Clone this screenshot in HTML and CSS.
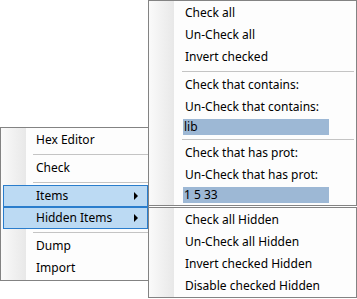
FILE: index.html
```html
<!DOCTYPE html>
<html lang="en">
<head>
  <meta charset="UTF-8" />
  <title>Context menu</title>
  <link rel="stylesheet" href="styles.css">
</head>
<body>

<div class="screen">
  <!-- main context menu -->
  <div class="menu main-menu">
    <div class="item">Hex Editor</div>
    <div class="sep"></div>
    <div class="item">Check</div>
    <div class="sep"></div>
    <div class="item sub active">Items <span class="arrow"></span></div>
    <div class="item sub active">Hidden Items <span class="arrow"></span></div>
    <div class="sep"></div>
    <div class="item">Dump</div>
    <div class="item">Import</div>
  </div>

  <!-- open submenus -->
  <div class="submenus">
    <div class="menu items-menu">
      <div class="item">Check all</div>
      <div class="item">Un-Check all</div>
      <div class="item">Invert checked</div>
      <div class="sep"></div>
      <div class="item">Check that contains:</div>
      <div class="item">Un-Check that contains:</div>
      <div class="field"><span class="field-text">lib</span></div>
      <div class="sep"></div>
      <div class="item">Check that has prot:</div>
      <div class="item">Un-Check that has prot:</div>
      <div class="field"><span class="field-text">1 5 33</span></div>
    </div>
    <div class="menu hidden-menu">
      <div class="item">Check all Hidden</div>
      <div class="item">Un-Check all Hidden</div>
      <div class="item">Invert checked Hidden</div>
      <div class="item">Disable checked Hidden</div>
    </div>
  </div>
</div>

</body>
</html>
```

FILE: styles.css
```css
* {
  box-sizing: border-box;
}

body {
  margin: 0;
  background: #ffffff;
  font-family: "Noto Sans", "Liberation Sans", sans-serif;
  font-size: 12px;
  color: #000;
}

.screen {
  display: flex;
  align-items: flex-start;
}

.menu {
  border: 1px solid #838383;
  background: linear-gradient(to right, #fafafa, #e8e8e8) no-repeat 0 0 / 25px 100%, #fdfdfd;
}

.item {
  height: 22px;
  line-height: 22px;
  white-space: nowrap;
}

.sep {
  height: 1px;
  background: #c4c4c4;
  margin: 3px 0 2px 0;
}

/* left menu */
.main-menu {
  width: 149px;
  margin-top: 127px;
  padding: 1px 0 1px 2px;
}

.main-menu .item {
  padding-left: 33px;
}

.main-menu .sep {
  margin-left: 30px;
}

.main-menu .item.active {
  background: #bcdaf3;
  border: 1px solid #2a7dcc;
  line-height: 20px;
  padding-left: 32px;
}

.item.sub {
  display: flex;
  align-items: center;
  justify-content: space-between;
  padding-right: 9px;
}

.arrow {
  width: 0;
  height: 0;
  border-left: 4px solid #000;
  border-top: 4px solid transparent;
  border-bottom: 4px solid transparent;
}

/* submenus */
.submenus {
  width: 209px;
  margin-left: -1px;
  display: flex;
  flex-direction: column;
  gap: 1px;
}

.submenus .menu {
  padding: 1px 0;
}

.submenus .item {
  padding-left: 36px;
}

.submenus .sep {
  margin-left: 33px;
  margin-right: 2px;
}

.field {
  height: 18px;
  padding: 1px 0 1px 34px;
}

.field-text {
  display: block;
  width: 146px;
  height: 16px;
  line-height: 16px;
  padding-left: 1px;
  background: #9db8d5;
}

.hidden-menu {
  height: 91px;
}
```
